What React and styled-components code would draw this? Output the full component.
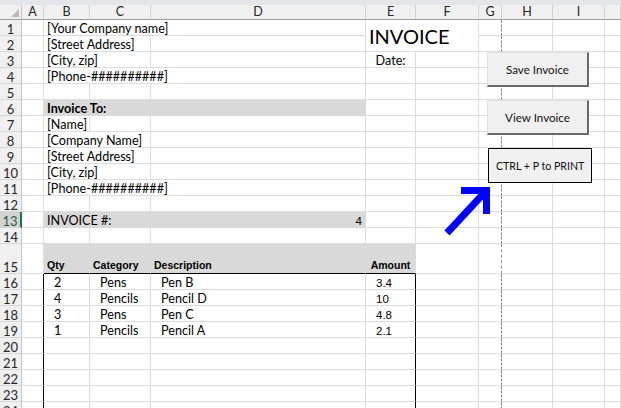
import React from 'react'
import styled, { createGlobalStyle } from 'styled-components'

const GRID = '#dadcdd'
const FILL = '#d9d9d9'
const COLS = ['A', 'B', 'C', 'D', 'E', 'F', 'G', 'H', 'I', 'J']
const ROW_COUNT = 24

// cell content, keyed by row then column
const spec = {
  1: { B: { span: 3, text: '[Your Company name]' }, E: { span: 2, rspan: 2, text: 'INVOICE', title: true } },
  2: { B: { span: 2, text: '[Street Address]' } },
  3: { B: { span: 2, text: '[City, zip]' }, E: { text: 'Date:', align: 'center' } },
  4: { B: { span: 3, text: '[Phone-##########]' } },
  6: { B: { span: 3, text: 'Invoice To:', bold: true, fill: true } },
  7: { B: { text: '[Name]' } },
  8: { B: { span: 2, text: '[Company Name]' } },
  9: { B: { span: 2, text: '[Street Address]' } },
  10: { B: { span: 2, text: '[City, zip]' } },
  11: { B: { span: 3, text: '[Phone-##########]' } },
  13: {
    B: { span: 2, text: 'INVOICE #:', fill: true, join: true },
    D: { text: '4', align: 'right', fill: true, num: true },
  },
  15: {
    B: { text: 'Qty', head: true, fill: true, join: true },
    C: { text: 'Category', head: true, fill: true, join: true },
    D: { text: 'Description', head: true, fill: true, join: true },
    E: { text: 'Amount', head: true, fill: true, align: 'center' },
  },
}

const items = [
  ['2', 'Pens', 'Pen B', '3.4'],
  ['4', 'Pencils', 'Pencil D', '10'],
  ['3', 'Pens', 'Pen C', '4.8'],
  ['1', 'Pencils', 'Pencil A', '2.1'],
]
items.forEach((it, i) => {
  spec[16 + i] = {
    B: { text: it[0], indent: true },
    C: { text: it[1], indent: true },
    D: { text: it[2], indent: true },
    E: { text: it[3], indent: true, num: true },
  }
})

const GlobalStyle = createGlobalStyle`
  body {
    margin: 0;
    background: #fff;
    overflow: hidden;
    font-family: Lato, "Liberation Sans", sans-serif;
  }
`

const Page = styled.div`
  position: relative;
  width: 621px;
  height: 408px;
  overflow: hidden;
`

const TopBand = styled.div`
  height: 5px;
  background: #e3e5e8;
`

const Sheet = styled.div`
  display: grid;
  grid-template-columns: 22px 22px 46px 61px 215px 50px 63px 23px 51px 52px 1fr;
  grid-template-rows: 15px repeat(14, 16px) 30px repeat(9, 16px);
`

const Corner = styled.div`
  position: relative;
  background: #f0f0f0;
  border-right: 1px solid #c6c6c6;
  border-bottom: 1px solid #9e9e9e;
  box-sizing: border-box;

  &::after {
    content: '';
    position: absolute;
    right: 2px;
    bottom: 2px;
    border-left: 8px solid transparent;
    border-bottom: 8px solid #b9b9b9;
  }
`

const ColHead = styled.div`
  box-sizing: border-box;
  background: #f0f0f0;
  border-right: 1px solid #d2d2d2;
  border-bottom: 1px solid #9e9e9e;
  color: #262626;
  font-size: 12.5px;
  line-height: 14px;
  text-align: center;
`

const RowHead = styled.div`
  box-sizing: border-box;
  grid-column: 1;
  grid-row: ${p => p.$row};
  background: ${p => (p.$active ? '#d2d2d2' : '#f0f0f0')};
  border-right: ${p => (p.$active ? '2px solid #217346' : '1px solid #c6c6c6')};
  border-bottom: 1px solid #d6d6d6;
  color: ${p => (p.$active ? '#2d5b3c' : '#262626')};
  font-size: 13px;
  display: flex;
  align-items: flex-end;
  justify-content: center;
  line-height: 12px;
`

const Cell = styled.div`
  box-sizing: border-box;
  grid-column: ${p => p.$col} / span ${p => p.$span};
  grid-row: ${p => p.$row} / span ${p => p.$rspan};
  background: ${p => (p.$fill ? FILL : 'transparent')};
  border-right: 1px ${p => (p.$dashed ? 'dashed' : 'solid')} ${p => p.$rb};
  border-bottom: 1px solid ${p => p.$bb};
  display: flex;
  align-items: flex-end;
  justify-content: ${p => (p.$align === 'right' ? 'flex-end' : p.$align === 'center' ? 'center' : 'flex-start')};
  padding: 0 ${p => (p.$align === 'right' ? 3 : 0)}px 0 ${p => (p.$indent ? 10 : p.$align ? 0 : 3)}px;
  padding-bottom: ${p => (p.$head ? 2 : p.$title ? 3 : 0)}px;
  white-space: nowrap;
  overflow: visible;
  color: #000;
  font-family: ${p => (p.$num || p.$head ? '"Liberation Sans", Arial, sans-serif' : 'Lato, sans-serif')};
  font-size: ${p => (p.$title ? '20px' : p.$head ? '10.5px' : p.$num ? '11.5px' : '12.6px')};
  font-weight: ${p => (p.$bold || p.$head ? 700 : 400)};
  line-height: ${p => (p.$title ? '24px' : '12px')};
`

const ShapeLayer = styled.div`
  position: absolute;
  left: 487px;
  top: 52px;
  display: flex;
  flex-direction: column;
  align-items: flex-start;
  gap: 13px;
`

const MacroButton = styled.div`
  width: 102px;
  height: 35px;
  box-sizing: border-box;
  background: #f0f0f0;
  border: 1px solid #e2e2e2;
  border-right: 2px solid #6a6a6a;
  border-bottom: 2px solid #6a6a6a;
  display: flex;
  align-items: center;
  justify-content: center;
  font-family: Lato, sans-serif;
  font-size: 11.6px;
  color: #111;
`

const PrintNote = styled.div`
  margin-left: 1px;
  width: 104px;
  height: 35px;
  box-sizing: border-box;
  background: #f0f0f0;
  border: 1px solid #000;
  display: flex;
  align-items: center;
  padding-left: 7px;
  white-space: nowrap;
  font-family: Lato, sans-serif;
  font-size: 10.6px;
  color: #111;
`

const Arrow = styled.svg`
  position: absolute;
  left: 430px;
  top: 175px;
`

function buildRow(r, covered) {
  const row = spec[r] || {}
  const out = []
  for (let i = 0; i < COLS.length; i++) {
    const key = COLS[i]
    if (covered.has(`${r}${key}`)) continue
    const def = row[key] || {}
    const span = def.span || 1
    const rspan = def.rspan || 1
    for (let dr = 0; dr < rspan; dr++) {
      for (let dc = 0; dc < span; dc++) {
        if (dr || dc) covered.add(`${r + dr}${COLS[i + dc]}`)
      }
    }
    const lastKey = COLS[i + span - 1]
    let rb = GRID
    let bb = GRID
    if (def.fill) {
      bb = FILL
      if (def.join) rb = FILL
    }
    if (r === 15 && ['B', 'C', 'D', 'E'].includes(key)) bb = '#000'
    if (r >= 16 && (lastKey === 'A' || lastKey === 'E')) rb = '#000'
    if (lastKey === 'G') rb = '#8c8c8c'
    out.push(
      <Cell
        key={`${r}${key}`}
        $row={r + 1}
        $col={i + 2}
        $span={span}
        $rspan={rspan}
        $rb={rb}
        $bb={bb}
        $dashed={lastKey === 'G'}
        $fill={def.fill}
        $bold={def.bold}
        $head={def.head}
        $num={def.num}
        $title={def.title}
        $indent={def.indent}
        $align={def.align}
      >
        {def.text}
      </Cell>
    )
    i += span - 1
  }
  return out
}

const App = () => {
  const covered = new Set()
  const rows = []
  for (let r = 1; r <= ROW_COUNT; r++) {
    rows.push(
      <RowHead key={`h${r}`} $row={r + 1} $active={r === 13}>
        {r}
      </RowHead>
    )
    rows.push(...buildRow(r, covered))
  }

  return (
    <Page>
      <GlobalStyle />
      <TopBand />
      <Sheet>
        <Corner />
        {COLS.map(c => (
          <ColHead key={c}>{c === 'J' ? '' : c}</ColHead>
        ))}
        {rows}
      </Sheet>

      <ShapeLayer>
        <MacroButton>Save Invoice</MacroButton>
        <MacroButton>View Invoice</MacroButton>
        <PrintNote>CTRL + P to PRINT</PrintNote>
      </ShapeLayer>

      <Arrow width="70" height="70" viewBox="430 175 70 70">
        <line x1="447" y1="233" x2="486" y2="191" stroke="#0000ff" strokeWidth="7" />
        <polyline points="461,190.5 486.5,190.5 486.5,214" fill="none" stroke="#0000ff" strokeWidth="7" strokeLinejoin="miter" />
      </Arrow>
    </Page>
  )
}

export default App
